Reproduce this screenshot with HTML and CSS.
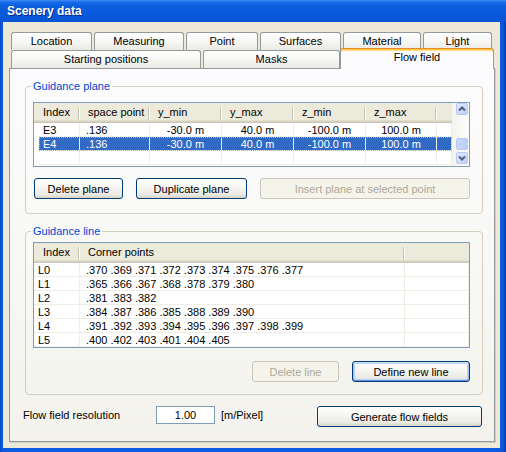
FILE: index.html
```html
<!DOCTYPE html>
<html lang="en">
<head>
<meta charset="utf-8">
<title>Scenery data</title>
<link rel="stylesheet" href="styles.css">
</head>
<body>
<div class="window">
  <div class="titlebar">Scenery data</div>
  <div class="client">
    <div class="tabs">
      <div class="tabrow">
        <div class="tab w-loc">Location</div>
        <div class="tab w-mea">Measuring</div>
        <div class="tab w-pt">Point</div>
        <div class="tab w-sur">Surfaces</div>
        <div class="tab w-mat">Material</div>
        <div class="tab w-lig">Light</div>
      </div>
      <div class="tabrow">
        <div class="tab w-sta">Starting positions</div>
        <div class="tab w-mas">Masks</div>
        <div class="tab sel">Flow field</div>
      </div>
    </div>
    <div class="panel">
      <fieldset class="group g1">
        <legend>Guidance plane</legend>
        <div class="list list1">
          <div class="lv">
            <div class="hdr cols1">
              <div class="hc first sep">Index</div>
              <div class="hc sep">space point</div>
              <div class="hc sep">y_min</div>
              <div class="hc sep">y_max</div>
              <div class="hc sep">z_min</div>
              <div class="hc sep">z_max</div>
              <div class="hc"></div>
            </div>
            <div class="row rcols1">
              <div class="cell first">E3</div>
              <div class="cell">.136</div>
              <div class="cell c">-30.0 m</div>
              <div class="cell c">40.0 m</div>
              <div class="cell c">-100.0 m</div>
              <div class="cell c">100.0 m</div>
              <div class="cell"></div>
            </div>
            <div class="row rcols1 sel">
              <div class="cell first">E4</div>
              <div class="cell">.136</div>
              <div class="cell c">-30.0 m</div>
              <div class="cell c">40.0 m</div>
              <div class="cell c">-100.0 m</div>
              <div class="cell c">100.0 m</div>
              <div class="cell"></div>
            </div>
            <div class="row rcols1">
              <div class="cell first"></div>
              <div class="cell"></div>
              <div class="cell"></div>
              <div class="cell"></div>
              <div class="cell"></div>
              <div class="cell"></div>
              <div class="cell"></div>
            </div>
          </div>
          <div class="scroll">
            <div class="sbtn"><svg width="10" height="10" viewBox="0 0 10 10"><polyline points="2,6.5 5,3.5 8,6.5" fill="none" stroke="#4D6185" stroke-width="2"/></svg></div>
            <div class="sbtn thumb"></div>
            <div class="sbtn"><svg width="10" height="10" viewBox="0 0 10 10"><polyline points="2,3.5 5,6.5 8,3.5" fill="none" stroke="#4D6185" stroke-width="2"/></svg></div>
          </div>
        </div>
        <div class="btnrow">
          <button class="btn w-delp">Delete plane</button>
          <button class="btn w-dup">Duplicate plane</button>
          <button class="btn dis w-ins">Insert plane at selected point</button>
        </div>
      </fieldset>

      <fieldset class="group g2">
        <legend>Guidance line</legend>
        <div class="list list2">
          <div class="lv">
            <div class="hdr cols2">
              <div class="hc first sep">Index</div>
              <div class="hc sep">Corner points</div>
              <div class="hc"></div>
            </div>
            <div class="row cols2"><div class="cell first">L0</div><div class="cell">.370 .369 .371 .372 .373 .374 .375 .376 .377</div><div class="cell"></div></div>
            <div class="row cols2"><div class="cell first">L1</div><div class="cell">.365 .366 .367 .368 .378 .379 .380</div><div class="cell"></div></div>
            <div class="row cols2"><div class="cell first">L2</div><div class="cell">.381 .383 .382</div><div class="cell"></div></div>
            <div class="row cols2"><div class="cell first">L3</div><div class="cell">.384 .387 .386 .385 .388 .389 .390</div><div class="cell"></div></div>
            <div class="row cols2"><div class="cell first">L4</div><div class="cell">.391 .392 .393 .394 .395 .396 .397 .398 .399</div><div class="cell"></div></div>
            <div class="row cols2"><div class="cell first">L5</div><div class="cell">.400 .402 .403 .401 .404 .405</div><div class="cell"></div></div>
          </div>
        </div>
        <div class="btnrow">
          <button class="btn dis w-dell">Delete line</button>
          <button class="btn def w-def">Define new line</button>
        </div>
      </fieldset>

      <div class="bottom">
        <div class="lbl">Flow field resolution</div>
        <div class="input">1.00</div>
        <div class="unit">[m/Pixel]</div>
        <button class="btn gen">Generate flow fields</button>
      </div>
    </div>
  </div>
</div>
</body>
</html>
```
FILE: styles.css
```css
* { box-sizing: border-box; }
html, body { margin: 0; padding: 0; }
body {
  width: 506px;
  height: 452px;
  overflow: hidden;
  font-family: "Liberation Sans", Arial, sans-serif;
  font-size: 11px;
  color: #000;
  background: #0A55DA;
}
.window {
  width: 506px;
  height: 452px;
  display: flex;
  flex-direction: column;
  background: linear-gradient(to right, #0A4CCB 0, #0B5AE0 3px, #0B5AE0 500px, #0A55DA 503px, #0838B0 506px);
}
.titlebar {
  flex: none;
  height: 22px;
  padding: 4px 0 0 7px;
  background: linear-gradient(to bottom, #3B8DF5 0, #1C6EEB 2px, #0C5FDF 5px, #0858DA 16px, #0A54D2 22px);
  color: #fff;
  font-weight: bold;
  font-size: 12px;
  line-height: 14px;
  text-shadow: 1px 1px 0 #0B2A8E;
}
.client {
  flex: 1;
  margin: 0 6px 4px 3px;
  background: #ECE9D8;
  padding: 10px 5px 6px 6px;
  display: flex;
  flex-direction: column;
}
.tabs { flex: none; margin-left: 2px; }
.tabrow { display: flex; gap: 2px; height: 18px; align-items: flex-start; }
.tab {
  flex: none;
  height: 18px;
  border: 1px solid #919B9C;
  border-bottom: none;
  border-radius: 3px 3px 0 0;
  background: linear-gradient(to bottom, #FFFFFF, #F7F7F4 50%, #EAE9E3);
  text-align: center;
  padding-top: 2px;
  line-height: 13px;
  white-space: nowrap;
}
.w-loc { width: 81px; }
.w-mea { width: 90px; }
.w-pt { width: 72px; }
.w-sur { width: 81px; }
.w-mat { width: 78px; }
.w-lig { width: 69px; }
.w-sta { width: 190px; }
.w-mas { width: 137px; }
.tab.sel {
  position: relative;
  z-index: 1;
  width: 154px;
  height: 21px;
  margin: -2px -2px 0 -2px;
  background: #FCFCFE;
  border-top: 1px solid #E68B2C;
  box-shadow: inset 0 1px 0 #FFC73C, inset 0 2px 0 #FFDB8A;
  padding-top: 2px;
}
.panel {
  flex: 1;
  border: 1px solid #919B9C;
  background: linear-gradient(to bottom, #FCFCFE 0, #F8F8F5 50%, #F3F2EC 100%);
  padding: 11px 0 0 15px;
  box-shadow: 1px 1px 0 #D0CEBF;
}
.group {
  margin: 0;
  width: 458px;
  min-inline-size: 0;
  border: 1px solid #D0D0BF;
  border-radius: 4px;
}
.group legend {
  padding: 0 2px;
  margin-left: -2px;
  color: #0046D5;
  line-height: 13px;
}
.g1 { padding: 9px 11px 14px 7px; }
.g2 { margin-top: 11px; padding: 4px 11px 12px 7px; }

.list {
  width: 437px;
  border: 1px solid #7F9DB9;
  background: #fff;
  display: flex;
}
.list1 { height: 65px; }
.list2 { height: 106px; }
.lv { flex: 1; min-width: 0; }

.hdr {
  display: grid;
  height: 20px;
  background: linear-gradient(to bottom, #EBEADB 0, #EBEADB 17px, #E2DECD 17px, #E2DECD 18px, #D6D2C2 18px, #D6D2C2 19px, #CBC7B8 19px);
}
.hc {
  position: relative;
  padding: 3px 0 0 8px;
  line-height: 13px;
  white-space: nowrap;
  overflow: hidden;
}
.hc.first { padding-left: 9px; }
.hc.sep::after {
  content: "";
  position: absolute;
  right: 1px;
  top: 4px;
  width: 1px;
  height: 13px;
  background: #C7C5B2;
  box-shadow: 1px 0 0 #FFFFFF;
}
.cols1 { grid-template-columns: 46px 70px 72px 72px 72px 71px 15px; }
.rcols1 { grid-template-columns: 41px 70px 72px 72px 72px 71px 15px; margin-left: 5px; }
.cols2 { grid-template-columns: 46px 325px 64px; }

.row {
  display: grid;
  height: 14px;
  border-bottom: 1px solid #EFEDE4;
}
.cell {
  border-right: 1px solid #EFEDE4;
  padding: 2px 0 0 6px;
  line-height: 11px;
  white-space: nowrap;
  overflow: hidden;
}
.cell.first { padding-left: 4px; }
.cell.c { text-align: center; padding-left: 0; }
.row.sel {
  background: #316AC5;
  color: #fff;
  outline: 1px dotted #D0B066;
  outline-offset: -1px;
}

.scroll {
  flex: none;
  width: 17px;
  display: flex;
  flex-direction: column;
  align-items: flex-end;
  padding: 0 1px 2px 0;
  background: linear-gradient(to right, #F4F3EE, #FDFDFA);
}
.sbtn {
  width: 12px;
  height: 12px;
  border: 1px solid #B7C9F1;
  border-radius: 2px;
  background: linear-gradient(135deg, #E3EBFE, #BDCFF8);
  display: flex;
  align-items: center;
  justify-content: center;
}
.thumb { margin-top: auto; margin-bottom: 2px; background: linear-gradient(to right, #CAD8FB, #BCCEF8); }

.btnrow { display: flex; gap: 13px; margin-top: 11px; margin-left: 1px; }
.g2 .btnrow { justify-content: flex-end; margin-top: 13px; margin-right: 1px; }
.btn {
  flex: none;
  height: 21px;
  padding: 2px 0 0 0;
  font: inherit;
  color: #000;
  border: 1px solid #003C74;
  border-radius: 3px;
  background: linear-gradient(to bottom, #FFFFFF 0, #F6F6F2 40%, #ECEBE5 80%, #D8D4C8 100%);
  line-height: 17px;
  text-align: center;
  white-space: nowrap;
}
.btn.dis {
  border-color: #C9C7BA;
  background: #F5F4EA;
  color: #ACA899;
}
.btn.def {
  box-shadow: inset 0 1px 0 #CEE7FF, inset 0 -1px 0 #6F92E8, inset 1px 0 0 #A0BDF2, inset -1px 0 0 #A0BDF2, inset 0 0 0 2px #BCD2F7;
}
.w-delp { width: 89px; }
.w-dup { width: 111px; }
.w-ins { width: 210px; }
.w-dell { width: 87px; }
.w-def { width: 118px; }

.bottom {
  display: flex;
  align-items: flex-start;
  width: 459px;
  margin-top: 11px;
  margin-left: -2px;
}
.lbl { width: 133px; line-height: 18px; white-space: nowrap; }
.input {
  width: 59px;
  height: 18px;
  border: 1px solid #7F9DB9;
  background: #fff;
  text-align: center;
  line-height: 16px;
}
.unit { margin-left: 6px; line-height: 18px; }
.btn.gen { margin-left: auto; width: 165px; }
```
